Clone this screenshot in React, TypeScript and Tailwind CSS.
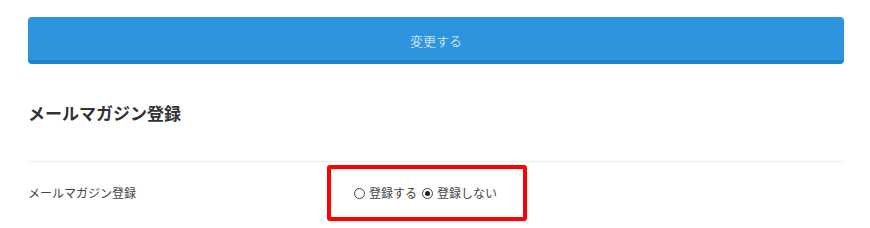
import React from 'react'

const Radio: React.FC<{ checked?: boolean; label: string }> = ({ checked, label }) => (
  <label className="flex items-center gap-[4px]">
    <span className="flex h-[11px] w-[11px] items-center justify-center rounded-full border border-[#444] bg-white">
      {checked && <span className="h-[5px] w-[5px] rounded-full bg-[#222]" />}
    </span>
    <span>{label}</span>
  </label>
)

export default function App() {
  return (
    <div
      className="relative h-[228px] w-[870px] bg-white pl-[28px] pr-[26px] pt-[17px]"
      style={{ fontFamily: '"Noto Sans CJK JP", "Noto Sans", sans-serif' }}
    >
      {/* 変更ボタン */}
      <button className="flex h-[47px] w-full items-center justify-center rounded-[4px] border-b-4 border-[#1c84c9] bg-[#2d95dd] pt-[4px] text-[13px] font-light text-white">
        変更する
      </button>

      {/* メールマガジン */}
      <h2 className="mt-[37px] text-[17px] font-bold leading-[24px] text-[#333]">メールマガジン登録</h2>

      <div className="mt-[36px] border-t border-[#eeeeee] pt-[22px]">
        <div className="flex items-center text-[12px] leading-[18px] text-[#444]">
          <div className="w-[326px]">メールマガジン登録</div>
          <div className="flex items-center gap-[5px]">
            <Radio label="登録する" />
            <Radio checked label="登録しない" />
          </div>
        </div>
      </div>

      {/* 注釈の赤枠 */}
      <div className="absolute left-[327px] top-[165px] h-[56px] w-[200px] rounded-[3px] border-4 border-[#ff0000]" />
    </div>
  )
}
